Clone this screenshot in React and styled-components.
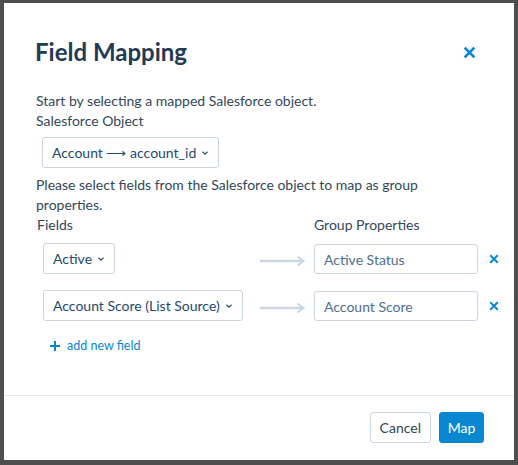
import styled, { createGlobalStyle } from 'styled-components'

const GlobalStyle = createGlobalStyle`
  html, body {
    margin: 0;
    background: #4e4e4e;
  }
  * { box-sizing: border-box; }
`

const fields = [
  { source: 'Active', target: 'Active Status' },
  { source: 'Account Score (List Source)', target: 'Account Score' },
]

const Chevron = () => (
  <svg width='8' height='6' viewBox='0 0 8 6'>
    <path d='M1.5 1.8 L4 4.2 L6.5 1.8' fill='none' stroke='currentColor' strokeWidth='1.2' />
  </svg>
)

const CloseIcon = ({ size, weight }) => (
  <svg width={size} height={size} viewBox='0 0 12 12'>
    <path d='M1.5 1.5 L10.5 10.5 M10.5 1.5 L1.5 10.5' stroke='currentColor' strokeWidth={weight} strokeLinecap='butt' />
  </svg>
)

const LongArrow = () => (
  <svg width='46' height='12' viewBox='0 0 46 12'>
    <path d='M0 6 H43' stroke='#cbd6e2' strokeWidth='2.6' />
    <path d='M37.5 1.5 L43.5 6 L37.5 10.5' fill='none' stroke='#cbd6e2' strokeWidth='2' />
  </svg>
)

export default function App() {
  return (
    <>
      <GlobalStyle />
      <Modal>
        <Header>
          <Title>Field Mapping</Title>
          <CloseButton><CloseIcon size={13} weight={2.6} /></CloseButton>
        </Header>

        <Body>
          <Text>Start by selecting a mapped Salesforce object.</Text>
          <Text>Salesforce Object</Text>
          <Select $indent>
            Account ⟶ account_id <Chevron />
          </Select>

          <Text $top={7}>Please select fields from the Salesforce object to map as group properties.</Text>

          <MappingGrid>
            <ColumnLabel $shift>Fields</ColumnLabel>
            <span />
            <ColumnLabel>Group Properties</ColumnLabel>
            <span />

            {fields.map(f => (
              <Row key={f.target}>
                <Cell><Select>{f.source} <Chevron /></Select></Cell>
                <ArrowCell><LongArrow /></ArrowCell>
                <Input defaultValue={f.target} />
                <RemoveButton><CloseIcon size={10} weight={2.4} /></RemoveButton>
              </Row>
            ))}
          </MappingGrid>

          <AddLink>
            <svg width='10' height='10' viewBox='0 0 10 10'>
              <path d='M5 0 V10 M0 5 H10' stroke='currentColor' strokeWidth='2' />
            </svg>
            add new field
          </AddLink>
        </Body>

        <Footer>
          <Button>Cancel</Button>
          <Button $primary>Map</Button>
        </Footer>
      </Modal>
    </>
  )
}

const Modal = styled.div`
  width: 510px;
  height: 457px;
  margin: 3px 4px;
  background: #fff;
  display: flex;
  flex-direction: column;
  font-family: Lato, 'Open Sans', sans-serif;
  color: #33475b;
`

const Header = styled.div`
  display: flex;
  align-items: center;
  justify-content: space-between;
  padding: 34px 38px 0 31px;
`

const Title = styled.h1`
  margin: 0;
  font-size: 24px;
  line-height: 30px;
  font-weight: 700;
  color: #213b55;
`

const CloseButton = styled.button`
  border: 0;
  background: none;
  padding: 0;
  display: flex;
  color: #0a87d1;
`

const Body = styled.div`
  flex: 1;
  padding: 24px 36px 0 32px;
`

const Text = styled.p`
  margin: ${p => p.$top || 0}px 0 0;
  font-size: 14px;
  line-height: 20px;
`

const Select = styled.div`
  display: inline-flex;
  align-items: center;
  gap: 5px;
  height: 31px;
  padding: 0 9px 0 9px;
  margin: ${p => (p.$indent ? '6px 0 0 6px' : '0')};
  border: 1px solid #cbd6e2;
  border-radius: 3px;
  font-size: 14px;
  color: #264a6e;
  white-space: nowrap;
`

const MappingGrid = styled.div`
  display: grid;
  grid-template-columns: 217px 54px 164px 1fr;
  margin: 0 0 0 7px;
`

const ColumnLabel = styled.div`
  font-size: 14px;
  line-height: 20px;
  margin: 0 0 8px ${p => (p.$shift ? '-6px' : '0')};
`

const Row = styled.div`
  display: contents;
`

const Cell = styled.div`
  display: flex;
  margin-bottom: 16px;
`

const ArrowCell = styled.div`
  display: flex;
  align-items: center;
  height: 31px;
  margin-top: 2px;
`

const Input = styled.input`
  width: 164px;
  height: 30px;
  margin-top: 1px;
  padding: 0 9px;
  border: 1px solid #cbd6e2;
  border-radius: 3px;
  font: 14px Lato, 'Open Sans', sans-serif;
  color: #516f90;
  outline: none;
`

const RemoveButton = styled.button`
  border: 0;
  background: none;
  padding: 0 0 0 11px;
  height: 31px;
  display: flex;
  align-items: center;
  color: #0a87d1;
`

const AddLink = styled.a`
  display: flex;
  width: fit-content;
  align-items: center;
  gap: 7px;
  margin: -1px 0 0 14px;
  font-size: 12.5px;
  line-height: 20px;
  color: #0a87d1;
`

const Footer = styled.div`
  display: flex;
  justify-content: flex-end;
  gap: 8px;
  padding: 16px 30px 17px;
  border-top: 1px solid #e5e8eb;
`

const Button = styled.button`
  height: 31px;
  padding: 0 ${p => (p.$primary ? '7px' : '9px')};
  min-width: ${p => (p.$primary ? '45px' : '61px')};
  border-radius: 3px;
  font: 14px Lato, 'Open Sans', sans-serif;
  border: 1px solid ${p => (p.$primary ? '#0a87d1' : '#cbd6e2')};
  background: ${p => (p.$primary ? '#0a87d1' : '#fff')};
  color: ${p => (p.$primary ? '#fff' : '#33475b')};
`
